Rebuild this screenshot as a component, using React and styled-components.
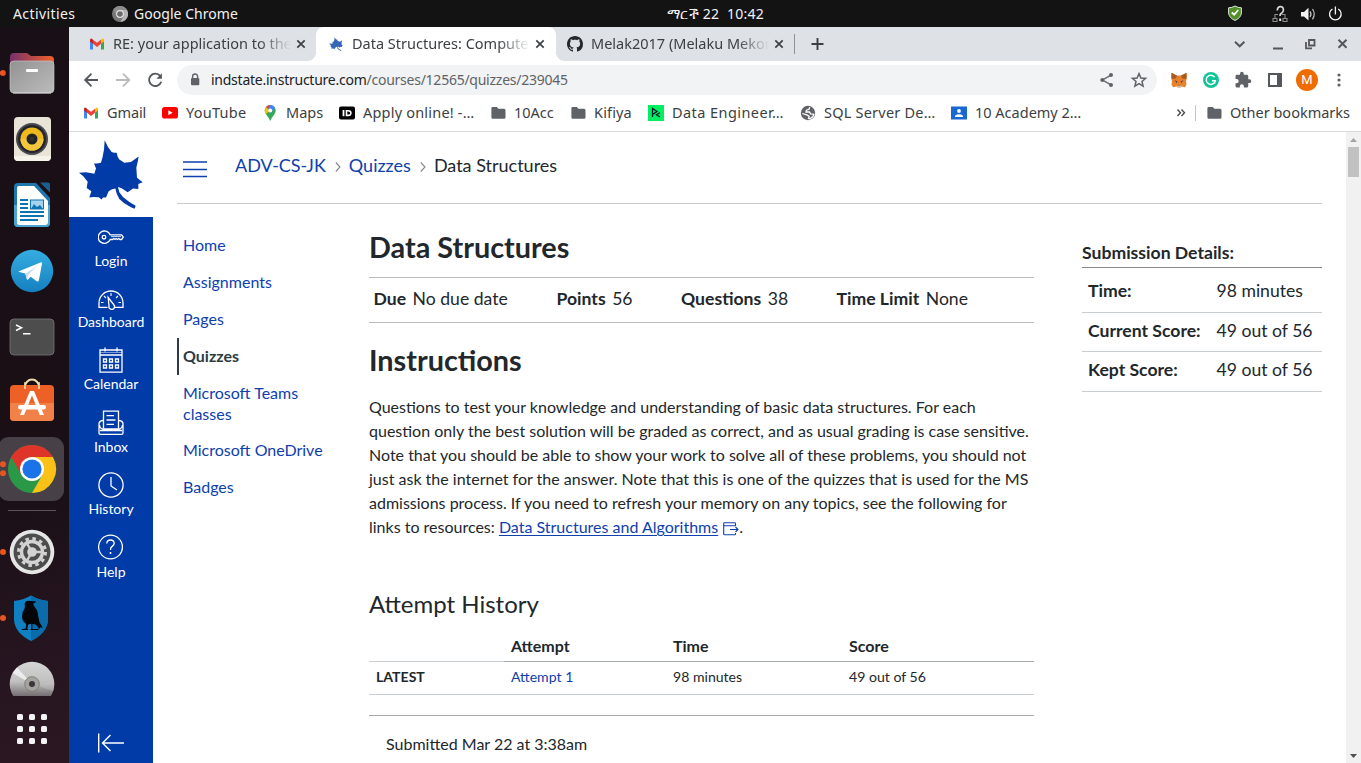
import React from "react";
import styled, { createGlobalStyle } from "styled-components";

const BLUE = "#003ba8";
const UI_FONT = '"Noto Sans", "Open Sans", "DejaVu Sans", sans-serif';

const GlobalStyle = createGlobalStyle`
  *, *::before, *::after { box-sizing: border-box; }
  body { margin: 0; overflow: hidden; background: #fff; }
  svg { display: block; flex: none; }
`;

/* ---------- desktop ---------- */
const Desktop = styled.div`
  width: 1361px;
  height: 763px;
  display: flex;
  flex-direction: column;
  overflow: hidden;
  font-family: ${UI_FONT};
`;
const TopBar = styled.header`
  height: 27px;
  flex: none;
  display: grid;
  grid-template-columns: 654px auto 1fr;
  align-items: center;
  background: #131313;
  color: #f2f2f2;
  font-size: 14px;
  line-height: 27px;
  padding: 0 18px 0 13px;
`;
const TopLeft = styled.div`
  display: flex;
  align-items: center;
  svg { margin: 0 6px 0 0; }
`;
const TopRight = styled.div`
  display: flex;
  align-items: center;
  justify-content: flex-end;
`;
const UiText = styled.span`
  white-space: pre;
  flex: none;
  width: ${(p) => (p.$w ? `${p.$w}px` : "auto")};
  letter-spacing: ${(p) => p.$ls || 0}px;
`;
const UrlText = styled(UiText)`
  margin-left: 10px;
  font-size: 14px;
  line-height: 20px;
`;
const Work = styled.div`
  flex: 1;
  min-height: 0;
  display: flex;
`;
const Dock = styled.nav`
  width: 69px;
  flex: none;
  padding-top: 13px;
  background: linear-gradient(165deg, #190f16 0%, #190f15 60%, #261520 85%, #2b1722 100%);
`;
const DockSlot = styled.div`
  height: ${(p) => p.$h || 66}px;
  overflow: hidden;
`;
const DockRule = styled.div`
  height: 17px;
  padding: 8px 0 0 8px;
  &::before { content: ""; display: block; width: 48px; height: 1px; background: #5d5459; }
`;

/* ---------- browser ---------- */
const Browser = styled.section`
  flex: 1;
  min-width: 0;
  display: flex;
  flex-direction: column;
  background: #fff;
  color: #3c4043;
  font-size: 14.5px;
`;
const TabStrip = styled.div`
  height: 34px;
  flex: none;
  display: flex;
  align-items: center;
  background: #dee1e6;
`;
const Tab = styled.div`
  position: relative;
  height: 34px;
  width: ${(p) => p.$w}px;
  display: flex;
  align-items: center;
  padding-left: ${(p) => p.$pl}px;
  background: ${(p) => (p.$active ? "#fff" : "transparent")};
  border-radius: 8px 8px 0 0;
  ${(p) =>
    p.$active &&
    `&::before, &::after {
      content: ""; position: absolute; bottom: 0; width: 8px; height: 8px;
    }
    &::before { left: -8px; background: radial-gradient(circle at 0 0, transparent 7.5px, #fff 8px); }
    &::after { right: -8px; background: radial-gradient(circle at 100% 0, transparent 7.5px, #fff 8px); }`}
`;
const TabTitle = styled.span`
  width: 178px;
  flex: none;
  margin-left: ${(p) => p.$ml || 8}px;
  padding-bottom: 2px;
  white-space: nowrap;
  mask-image: linear-gradient(90deg, #000 146px, transparent 178px);
`;
const CloseIcon = styled.svg`
  margin-left: 4px;
`;
const TabDivider = styled.i`
  width: 1px;
  height: 20px;
  background: #8f9296;
`;
const WindowButtons = styled.div`
  margin-left: auto;
  display: flex;
  align-items: center;
  padding-right: 10px;
`;
const Toolbar = styled.div`
  height: 37px;
  flex: none;
  display: flex;
  align-items: center;
  padding: 1px 6px 0 12px;
`;
const Omnibox = styled.div`
  width: 980px;
  flex: none;
  height: 30px;
  margin-left: 12px;
  border-radius: 15px;
  background: #f1f3f4;
  display: flex;
  align-items: center;
  padding: 0 8px 0 12px;
  color: #5f6368;
  b { font-weight: 400; color: #202124; }
`;
const OmniActions = styled.div`
  margin-left: auto;
  display: flex;
  gap: 12px;
`;
const Extensions = styled.div`
  display: flex;
  align-items: center;
  margin-left: 6px;
`;
const ExtSlot = styled.div`
  width: 32px;
  height: 30px;
  flex: none;
  display: flex;
  align-items: center;
  justify-content: center;
`;
const Avatar = styled.div`
  width: 22px;
  height: 22px;
  border-radius: 50%;
  background: #ef6c00;
  color: #fff;
  font: 13px/22px Roboto, sans-serif;
  text-align: center;
`;
const Bookmarks = styled.div`
  height: 34px;
  flex: none;
  display: flex;
  align-items: center;
  padding-left: 14px;
  padding-bottom: 3px;
  border-bottom: 1px solid #d9dadc;
`;
const Bookmark = styled.div`
  width: ${(p) => p.$w}px;
  flex: none;
  display: flex;
  align-items: center;
  gap: 8px;
  > span { padding-bottom: 2px; }
`;
const BookmarkDivider = styled.i`
  width: 1px;
  height: 16px;
  background: #c4c7ca;
  margin: 0 10px 0 9px;
`;

/* ---------- page ---------- */
const Page = styled.div`
  flex: 1;
  min-height: 0;
  display: flex;
  font-family: Lato, "Liberation Sans", sans-serif;
  color: #2d3b45;
`;
const GlobalNav = styled.nav`
  width: 84px;
  flex: none;
  background: ${BLUE};
  display: flex;
  flex-direction: column;
`;
const LogoBox = styled.div`
  height: 85px;
  background: #fff;
  padding: 8px 0 0 10px;
`;
const NavItem = styled.div`
  height: ${(p) => p.$h}px;
  flex: none;
  display: flex;
  flex-direction: column;
  align-items: center;
  color: #fff;
  font-size: 14px;
  line-height: 18px;
  svg { margin-bottom: ${(p) => p.$gap || 1}px; }
`;
const NavList = styled.div`
  padding-top: 7px;
  flex: 1;
`;
const NavCollapse = styled.div`
  padding: 0 0 10px 28px;
`;
const Main = styled.main`
  width: 1193px;
  flex: none;
  padding: 0 24px;
  color: #22272b;
`;
const CrumbBar = styled.div`
  height: 72px;
  display: flex;
  align-items: flex-start;
  padding: 21px 0 0 6px;
  border-bottom: 1px solid #c8cacc;
  font-size: 18px;
  line-height: 24px;
  > svg:first-child { margin-top: 7.5px; margin-right: 27px; }
`;
const Crumb = styled.span`
  color: ${(p) => (p.$current ? "#22272b" : "#0e40ae")};
`;
const CrumbArrow = styled.svg`
  margin: 8px 8px 0 9px;
`;
const Columns = styled.div`
  display: flex;
  align-items: flex-start;
`;
const CourseMenu = styled.ul`
  width: 192px;
  flex: none;
  margin: 0;
  padding: 23.4px 0 0;
  list-style: none;
  font-size: 16px;
  line-height: 21px;
`;
const MenuItem = styled.li`
  padding: 7px 20px 8.8px ${(p) => (p.$active ? 4 : 6)}px;
  border-left: ${(p) => (p.$active ? "2px solid #2d3b45" : "0")};
  color: ${(p) => (p.$active ? "#2d3b45" : "#0e40ae")};
  font-weight: ${(p) => (p.$active ? 700 : 400)};
  white-space: nowrap;
`;
const Article = styled.article`
  width: 665px;
  flex: none;
`;
const Heading = styled.h1`
  margin: ${(p) => p.$m};
  font-size: 28.8px;
  line-height: 36px;
  font-weight: 700;
`;
const Facts = styled.ul`
  margin: 0;
  padding: 0 0 4px 4.5px;
  list-style: none;
  display: flex;
  align-items: center;
  height: 46px;
  border-top: 1px solid #b9bcbe;
  border-bottom: 1px solid #b9bcbe;
  font-size: 17.6px;
`;
const Fact = styled.li`
  width: ${(p) => p.$w}px;
  flex: none;
  white-space: nowrap;
  b { margin-right: 6.5px; }
`;
const Paragraph = styled.p`
  margin: 17px 0 0;
  font-size: 16px;
  line-height: 24px;
  white-space: nowrap;
`;
const ResourceLink = styled.a`
  color: #0e40ae;
  text-decoration: underline;
  text-underline-offset: 2px;
`;
const ExternalIcon = styled.svg`
  && { display: inline-block; }
  vertical-align: -3px;
  margin-left: 5px;
`;
const SubHeading = styled.h2`
  margin: 50px 0 0;
  font-size: 24px;
  line-height: 30px;
  font-weight: 400;
`;
const Attempts = styled.div`
  margin-top: 13px;
  border-bottom: 1px solid #a7a9ab;
  height: 84px;
`;
const AttemptRow = styled.div`
  display: grid;
  grid-template-columns: 135px 162px 176px 192px;
  font-size: ${(p) => (p.$head ? 16 : 14.08)}px;
  font-weight: ${(p) => (p.$head ? 700 : 400)};
  line-height: ${(p) => (p.$head ? 27 : 30)}px;
  > span {
    padding-left: 7px;
    padding-bottom: 2px;
    border-bottom: 1px solid ${(p) => (p.$head ? "#a5abb0" : "#c7cdd1")};
  }
  > span:first-child { border-bottom-color: #c7cdd1; }
`;
const Submitted = styled.div`
  padding: 18px 0 0 17px;
  font-size: 16px;
  line-height: 20px;
`;
const Aside = styled.aside`
  width: 240px;
  margin-left: 48px;
  padding-top: 39px;
  font-size: 17.6px;
`;
const AsideTitle = styled.h3`
  margin: 0;
  height: 25px;
  line-height: 20px;
  font-size: 17.6px;
  font-weight: 700;
  border-bottom: 1px solid #888b8e;
`;
const ScoreRow = styled.div`
  height: ${(p) => p.$h}px;
  display: grid;
  grid-template-columns: 128.5px 1fr;
  align-items: center;
  padding: 0 0 ${(p) => p.$pb || 0}px 6px;
  border-bottom: 1px solid #c7cdd1;
  white-space: nowrap;
`;
const Scrollbar = styled.div`
  width: 15px;
  margin-left: auto;
  background: #f1f1f1;
  display: flex;
  flex-direction: column;
  align-items: center;
  padding: 6px 0 5px;
`;
const Thumb = styled.div`
  width: 11px;
  height: 30px;
  margin-top: 5px;
  margin-bottom: auto;
  background: #c1c1c1;
`;

/* ---------- drawings ---------- */
const LEAF =
  "M86 13 96 33 107 48 114 50 122 50 125 62 130 70 145 80 165 78 188 61 185 78 181 95 182 110 183 125 200 138 187 143 187 158 171 157 155 168 146 162 137 156 126 152 130 168 141 182 160 197 179 208 176 217 165 213 145 201 130 188 122 172 118 157 108 159 98 165 90 184 81 184 77 190 68 183 52 182 40 184 46 165 32 155 35 137 22 120 9 110 30 108 55 113 60 97 54 82 63 82 75 80 80 62 84 40Z";
const Leaf = ({ w, h, fill }) => (
  <svg width={w} height={h} viewBox="9 12 192 206" preserveAspectRatio="none">
    <path d={LEAF} fill={fill} />
  </svg>
);
const Gmail = () => (
  <svg width="16" height="16" viewBox="0 0 16 16">
    <path d="M1 4.2V13q0 .6.7.6H4V7z" fill="#4285f4" />
    <path d="M15 4.2V13q0 .6-.7.6H12V7z" fill="#34a853" />
    <path d="M12 3.7 13.2 2.7Q15 2 15 4.3V5.5L12 7.8z" fill="#fbbc04" />
    <path d="M4 3.7 2.8 2.7Q1 2 1 4.3V5.5L4 7.8z" fill="#c5221f" />
    <path d="M4 3.7 8 6.8 12 3.7V7.8L8 10.9 4 7.8z" fill="#ea4335" />
  </svg>
);
const Close = () => (
  <CloseIcon width="12" height="12" viewBox="0 0 12 12">
    <path d="M2.3 2.3 9.7 9.7M9.7 2.3 2.3 9.7" stroke="#3c4043" strokeWidth="1.7" />
  </CloseIcon>
);
const Folder = () => (
  <svg width="16" height="16" viewBox="-1 0 16 16">
    <path d="M1.6 2H5.8L7.4 3.7H13Q14.5 3.7 14.5 5.2V12.4Q14.5 13.8 13 13.8H1.8Q.4 13.8.4 12.4V3.3Q.4 2 1.6 2Z" fill="#5f6368" />
  </svg>
);
const MiniChrome = () => (
  <svg width="16" height="16" viewBox="0 0 16 16">
    <circle cx="8" cy="8" r="8" fill="#777" />
    <path d="M8 4H15A8 8 0 0 1 8.5 16L11.5 10Z" fill="#b5b5b5" />
    <path d="M8 0A8 8 0 0 0 1.2 3.8L4.5 10 8 4h7A8 8 0 0 0 8 0Z" fill="#8d8d8d" />
    <circle cx="8" cy="8" r="3.9" fill="#e4e4e4" />
    <circle cx="8" cy="8" r="2.8" fill="#6b6b6b" />
  </svg>
);
const Github = () => (
  <svg width="16" height="16" viewBox="0 0 16 16" fill="#24292f">
    <path d="M8 0C3.58 0 0 3.58 0 8c0 3.54 2.29 6.53 5.47 7.59.4.07.55-.17.55-.38 0-.19-.01-.82-.01-1.49-2.01.37-2.53-.49-2.69-.94-.09-.23-.48-.94-.82-1.13-.28-.15-.68-.52-.01-.53.63-.01 1.08.58 1.23.82.72 1.21 1.87.87 2.33.66.07-.52.28-.87.51-1.07-1.78-.2-3.64-.89-3.64-3.95 0-.87.31-1.59.82-2.15-.08-.2-.36-1.02.08-2.12 0 0 .67-.21 2.2.82.64-.18 1.32-.27 2-.27s1.36.09 2 .27c1.53-1.04 2.2-.82 2.2-.82.44 1.1.16 1.92.08 2.12.51.56.82 1.27.82 2.15 0 3.07-1.87 3.75-3.65 3.95.29.25.54.73.54 1.48 0 1.07-.01 1.93-.01 2.2 0 .21.15.46.55.38A8.01 8.01 0 0 0 16 8c0-4.42-3.58-8-8-8Z" />
  </svg>
);

const FilesIcon = () => (
  <svg width="69" height="66" viewBox="0 0 69 66">
    <defs>
      <linearGradient id="fb"><stop offset="0" stopColor="#77316a" /><stop offset="1" stopColor="#f2602a" /></linearGradient>
      <linearGradient id="ff" x2="1" y2="1"><stop offset="0" stopColor="#929292" /><stop offset="1" stopColor="#bcbcbc" /></linearGradient>
    </defs>
    <circle cx="2.8" cy="33" r="3" fill="#e95420" />
    <path d="M10 31V17Q10 13 14 13H26Q28 13 29.5 15L31 16H50Q54 16 54 20V31Z" fill="url(#fb)" />
    <rect x="10" y="21" width="44" height="32" rx="4" fill="url(#ff)" stroke="#d0d0d0" strokeWidth=".6" />
    <path d="M13 53H51" stroke="#d9d9d9" />
    <rect x="26" y="29" width="12" height="3" rx="1" fill="#fff" />
  </svg>
);
const SpeakerIcon = () => (
  <svg width="69" height="66" viewBox="0 0 69 66">
    <rect x="14" y="11" width="37" height="44" rx="4" fill="#e8e4d8" />
    <path d="M14 50Q14 55 18 55H47Q51 55 51 50Z" fill="#f6f3ea" />
    <circle cx="32" cy="33" r="16" fill="#4a4b50" /><circle cx="32" cy="33" r="14" fill="#23252b" />
    <circle cx="32" cy="33" r="11.5" fill="#edb91c" /><path d="M20.5 33A11.5 11.5 0 0 0 43.5 33Z" fill="#f2c73b" />
    <circle cx="32" cy="33" r="5.5" fill="#22242a" /><circle cx="32" cy="33" r="2" fill="#333" />
  </svg>
);
const WriterIcon = () => (
  <svg width="69" height="66" viewBox="0 0 69 66">
    <path d="M18 11H36L50 26V51Q50 55 46 55H18Q14 55 14 51V15Q14 11 18 11Z" fill="#1f77ad" />
    <path d="M14 33H50V51Q50 55 46 55H18Q14 55 14 51Z" fill="#4ba3d2" />
    <path d="M19 14H34L48 29V50Q48 53 45 53H19Q17 53 17 51V16Q17 14 19 14Z" fill="#fff" />
    <path d="M40 10.500H48Q50 10.500 50 12.500V20.500Z" fill="#19608f" />
    <path d="M20 28H28M20 32H28M20 36H28M20 40H44M20 44H44M20 48H38" stroke="#0e75b3" strokeWidth="1.8" />
    <rect x="30.5" y="28" width="13" height="9" fill="#a5d3ec" stroke="#0e75b3" />
    <path d="M31 37 34 32 37 35 40 33 43 37Z" fill="#0e75b3" />
  </svg>
);
const TelegramIcon = () => (
  <svg width="69" height="66" viewBox="0 0 69 66">
    <defs><linearGradient id="tg" x2="0" y2="1"><stop offset="0" stopColor="#35ade1" /><stop offset="1" stopColor="#1580c0" /></linearGradient></defs>
    <circle cx="32" cy="33" r="21.2" fill="url(#tg)" />
    <path d="M19 33.2 40.5 24.4Q42.3 24 42 25.8L38.9 42.2Q38.5 44.2 36.7 43.2L30.7 38.8 27.8 41.7Q27 42 26.8 41L25.3 35.6 19.3 34Q18 33.7 19 33.2Z" fill="#fff" />
    <path d="M25.3 35.6 37 28.2 28.7 36.2 27.2 41.8Z" fill="#c6dff0" />
  </svg>
);
const TerminalIcon = () => (
  <svg width="69" height="66" viewBox="0 0 69 66">
    <rect x="10" y="15" width="44" height="36" rx="4" fill="#4d4d4d" stroke="#777" strokeWidth=".8" />
    <path d="M16 21 21.5 23.7 16 26.5M23 29.7H30.5" stroke="#fff" strokeWidth="1.5" fill="none" />
  </svg>
);
const StoreIcon = () => (
  <svg width="69" height="66" viewBox="0 0 69 66">
    <path d="M25 17A7 7.4 0 0 1 39 17" fill="none" stroke="#edd9ac" strokeWidth="2" />
    <rect x="10" y="15" width="44" height="36" rx="4" fill="#ee6126" />
    <path d="M10 33H54V47Q54 51 50 51H14Q10 51 10 47Z" fill="#f28049" />
    <path d="M25 19V12M39 19V12" stroke="#edd9ac" strokeWidth="1.6" />
    <path d="M30 21H34L44 45H39.8L32 25.5 24 45H20Z" fill="#fff" />
    <rect x="18" y="35" width="28" height="4.6" rx="2.3" fill="#fff" />
  </svg>
);
const ChromeIcon = () => (
  <svg width="69" height="66" viewBox="0 0 69 66">
    <rect x="-2" y="1" width="66" height="64" rx="11" fill="#474046" />
    <circle cx="3" cy="28.3" r="3" fill="#e95420" /><circle cx="3" cy="37.3" r="3" fill="#e95420" />
    <circle cx="32" cy="33" r="24" fill="#2b9848" />
    <path d="M32 21H52.8A24 24 0 0 1 32 57L42.4 39Z" fill="#fbc116" />
    <path d="M11.2 21A24 24 0 0 1 52.8 21H32L21.6 39Z" fill="#df3429" />
    <circle cx="32" cy="33" r="12" fill="#fff" /><circle cx="32" cy="33" r="9.6" fill="#1a73e8" />
  </svg>
);
const SettingsIcon = () => (
  <svg width="69" height="66" viewBox="0 0 69 66">
    <circle cx="3" cy="33" r="3" fill="#e95420" />
    <circle cx="32" cy="33" r="22.3" fill="#e6e6e6" /><circle cx="32" cy="33" r="18.5" fill="#4c4c4c" />
    <circle cx="32" cy="33" r="13.5" fill="none" stroke="#d2d2d2" strokeWidth="3" strokeDasharray="3.53 3.54" />
    <circle cx="32" cy="33" r="10.5" fill="none" stroke="#d2d2d2" strokeWidth="3.4" />
    <circle cx="32" cy="33" r="4.8" fill="#d2d2d2" />
    <path d="M32 33H42M32 33 27 24.5M32 33 27 41.5" stroke="#d2d2d2" strokeWidth="2.4" />
  </svg>
);
const RavenIcon = () => (
  <svg width="69" height="66" viewBox="0 0 69 66">
    <circle cx="3" cy="33" r="3" fill="#e95420" />
    <path d="M31 10.5Q39 15 48 16V35Q47 48 31 56Q15 48 14 35V16Q23 15 31 10.5Z" fill="#0f80c4" />
    <path d="M31 10.5Q39 15 48 16V35Q47 48 31 56Z" fill="#0a6cab" />
    <path d="M24.6 19Q25.5 15.8 28.5 15.8L36.5 16.5 33.2 18.8Q33.3 20.5 35 22.5 38 25.5 38 30.5L39.6 37.5 42.8 42.8 40.3 42.3 39.3 44 35.7 39.5 31 38.8 28.3 39.5 27.3 43.5 28.5 45H21L22.5 43.9 25.8 43.5 26 38.8Q22 36.5 22 31.5 22 26.5 24.6 23.5 25.3 21 24.6 19Z" fill="#050608" />
    <path d="M31.8 38V44.3M30.5 44.5H38.5" stroke="#050608" strokeWidth="1.1" />
  </svg>
);
const DiscIcon = () => (
  <svg width="69" height="45" viewBox="0 0 69 45">
    <defs><linearGradient id="dg" x2="0" y2="1"><stop offset="0" stopColor="#d6d6d6" /><stop offset=".45" stopColor="#c0c0c0" /><stop offset=".8" stopColor="#6d666a" /></linearGradient></defs>
    <circle cx="32" cy="33" r="22.3" fill="url(#dg)" />
    <path d="M32 33 12.5 22 17 16.5Z" fill="#f5f5f5" opacity=".8" />
    <path d="M32 33 53 40H54L54.3 31Z" fill="#ddd" opacity=".25" />
    <circle cx="32" cy="33" r="7.3" fill="#a5a3a2" stroke="#857f73" /><circle cx="32" cy="33" r="3" fill="#39373a" />
  </svg>
);
const GridIcon = () => (
  <svg width="69" height="66" viewBox="0 0 69 66" fill="#f3f3f3">
    {[17, 29, 41].map((x) => [18, 30, 42].map((y) => <rect key={`${x}-${y}`} x={x} y={y} width="6" height="6" rx="1.6" />))}
  </svg>
);

const stroke = { fill: "none", stroke: "#fff", strokeWidth: 1.3 };
const KeyIcon = () => (
  <svg width="26" height="27" viewBox="0 0 26 27" {...stroke}>
    <path d="M12.2 10.9A6.2 6.2 0 1 0 12.2 15.500H14.5L15.8 14.5 17 15.5 18.2 14.5 19.5 15.5 20.8 14.5 22 15.5H23.6L25.3 13.2 23.6 10.9Z" />
    <circle cx="6" cy="13.2" r="1.8" /><path d="M13 12.6H23" strokeWidth=".8" />
  </svg>
);
const GaugeIcon = () => (
  <svg width="26" height="26" viewBox="0 0 26 26" {...stroke}>
    <path d="M9.5 21.3H1V17A12 12 0 0 1 25 17V21.3H17" />
    <path d="M10.2 11.5 15.6 18.5A2.8 2.8 0 1 1 11 20Z" />
    <path d="M13 7V10M6 10 8 12M20 10 18 12M3 16.5H5.5M20.5 16.5H23" strokeWidth="1.1" />
  </svg>
);
const CalendarIcon = () => (
  <svg width="26" height="26" viewBox="0 0 26 26" {...stroke}>
    <path d="M2 3H24V25.2H2ZM2 8H24M7 .5V4.5M19 .5V4.5" />
    <path d="M2 5.5H24" strokeWidth=".7" opacity=".7" />
    <path d="M5.5 12H8.5V15H5.5ZM11.5 12H14.5V15H11.5ZM17.5 12H20.5V15H17.5ZM5.5 18H8.5V21H5.5ZM11.5 18H14.5V21H11.5ZM17.5 18H20.5V21H17.5Z" strokeWidth="1.3" />
  </svg>
);
const InboxIcon = () => (
  <svg width="26" height="26" viewBox="0 0 26 26" {...stroke}>
    <path d="M5.5 18.5V1.2H20.5V18.5M8.5 5.7H16M8.5 10H17.5M8.5 14.3H16" />
    <path d="M5 10.5Q1 11 1 14V23Q1 24.4 2.5 24.4H23.5Q25 24.4 25 23V14Q25 11 21 10.5M1.5 15Q2 18.8 5 19H21Q24 18.8 24.5 15M2 20.5H24" />
  </svg>
);
const ClockIcon = () => (
  <svg width="26" height="26" viewBox="0 0 26 26" {...stroke}>
    <circle cx="13" cy="13" r="12.1" /><path d="M13 5V14L19 18" />
  </svg>
);
const HelpIcon = () => (
  <svg width="26" height="26" viewBox="0 0 26 26" {...stroke}>
    <circle cx="12.5" cy="13" r="11.9" />
    <path d="M8.8 9.5Q9 6 12.5 6T16.2 9.3Q16.2 11 14.2 12.4T12.5 16" /><path d="M12.5 18V20" strokeWidth="1.6" />
  </svg>
);

const NAV = [
  ["Login", KeyIcon, 62, 1],
  ["Dashboard", GaugeIcon, 60.5, 1],
  ["Calendar", CalendarIcon, 63.5, 2],
  ["Inbox", InboxIcon, 62, 2],
  ["History", ClockIcon, 62, 2],
  ["Help", HelpIcon, 62, 3],
];
const MENU = ["Home", "Assignments", "Pages", "Quizzes", "Microsoft Teams classes", "Microsoft OneDrive", "Badges"];
const LINES = [
  "Questions to test your knowledge and understanding of basic data structures. For each",
  "question only the best solution will be graded as correct, and as usual grading is case sensitive.",
  "Note that you should be able to show your work to solve all of these problems, you should not",
  "just ask the internet for the answer. Note that this is one of the quizzes that is used for the MS",
  "admissions process. If you need to refresh your memory on any topics, see the following for",
];

function StatusIcons() {
  return (
    <TopRight>
      <svg width="115" height="22" viewBox="0 1 115 22">
        <path d="M7 4Q4 5.8.6 5.8V11Q1 15.8 7 18.5Q13 15.8 13.4 11V5.8Q10 5.8 7 4Z" fill="#53902a" stroke="#dce6d4" />
        <path d="M3.8 10.5 6.2 12.7 10.2 8" fill="none" stroke="#fff" strokeWidth="1.8" />
        <g fill="none" stroke="#8d8d8d" strokeWidth="1.1">
          <path d="M45 16.5H49V19.5H45ZM55 16.5H59V19.5H55ZM47 16V12.5H50M57 16V12.5H54" />
          <path d="M49.3 8.5Q49.5 4.7 52.5 4.7T55.4 8Q55.4 10 53.5 11.2T52.3 14" stroke="#d8d8d8" strokeWidth="1.7" /><path d="M52.2 16.5V19" stroke="#e8e8e8" strokeWidth="2" />
        </g>
        <path d="M73 10H76L80.5 5.700V18.5L76 14.5H73Z" fill="#f2f2f2" />
        <path d="M82 9.3Q84 12 82 15M84.5 7Q88 12 84.5 17.3" fill="none" stroke="#c5c5c5" strokeWidth="1.2" />
        <path d="M110.2 7A5.8 5.8 0 1 1 104.5 7M107.4 4.5V12.5" fill="none" stroke="#f2f2f2" strokeWidth="1.3" />
      </svg>
    </TopRight>
  );
}

function Tabs() {
  return (
    <TabStrip>
      <Tab $w={247} $pl={20}>
        <Gmail /><TabTitle>RE: your application to the</TabTitle><Close />
      </Tab>
      <Tab $w={240} $pl={13} $active>
        <Leaf w={14} h={14} fill="#3367b5" /><TabTitle $ml={9}>Data Structures: Compute</TabTitle><Close />
      </Tab>
      <Tab $w={238} $pl={11}>
        <Github /><TabTitle>Melak2017 (Melaku Mekon</TabTitle><Close />
      </Tab>
      <TabDivider />
      <svg width="44" height="20" viewBox="0 0 44 20"><path d="M16.5 10H28.5M22.5 4V16" stroke="#3c4043" strokeWidth="1.9" /></svg>
      <WindowButtons>
        <svg width="118" height="20" viewBox="0 0 118 20" fill="none" stroke="#54575b" strokeWidth="2">
          <path d="M2 7.8 6.7 12.3 11.4 7.8M40 14.5H50" />
          <path d="M76 6H81.5V11.5H76ZM73 8V14.3H79" strokeWidth="1.8" />
          <path d="M105.5 5.8 113.5 13.8M113.5 5.8 105.5 13.8" />
        </svg>
      </WindowButtons>
    </TabStrip>
  );
}

function AddressBar() {
  return (
    <Toolbar>
      <svg width="84" height="20" viewBox="0 0 84 20" fill="none" stroke="#54585d" strokeWidth="1.9">
        <path d="M17 10H4.5M10.5 3.7 4.2 10 10.5 16.3" />
        <path d="M35 10H48M42 3.7 48.3 10 42 16.3" stroke="#b9bbbd" />
        <path d="M79.2 6A6.2 6.2 0 1 0 80.2 11.8" /><path d="M80.9 3.3V8.8H75.4Z" fill="#54585d" stroke="none" />
      </svg>
      <Omnibox>
        <svg width="12" height="16" viewBox="0 0 12 16"><rect x="2" y="6" width="8.3" height="7.3" rx="1" fill="#5f6368" /><path d="M3.6 6.5V4.5A2.5 2.5 0 0 1 8.6 4.5V6.5" fill="none" stroke="#5f6368" strokeWidth="1.4" /></svg>
        <UrlText $ls={-0.25}><b>indstate.instructure.com</b>/courses/12565/quizzes/239045</UrlText>
        <OmniActions>
          <svg width="20" height="20" viewBox="0 0 20 20"><path d="M14 5.2 5.5 10 14 14.8" fill="none" stroke="#5f6368" strokeWidth="1.4" /><circle cx="14" cy="5" r="2" fill="#5f6368" /><circle cx="5.3" cy="10" r="2" fill="#5f6368" /><circle cx="14" cy="15" r="2" fill="#5f6368" /></svg>
          <svg width="20" height="20" viewBox="0 0 20 20"><path d="M10 3.6 11.9 8 16.6 8.4 13 11.5 14.1 16.2 10 13.7 5.9 16.2 7 11.5 3.4 8.4 8.1 8Z" fill="none" stroke="#5f6368" strokeWidth="1.5" /></svg>
        </OmniActions>
      </Omnibox>
      <Extensions>
        <ExtSlot>
          <svg width="16" height="16" viewBox="0 0 16 16">
            <path d="M.5.7 6 3.5H10L15.5.7 16 5 15 9.5 15.5 12.5 14 15.3 10.5 14.5 9.3 15.5H6.7L5.5 14.5 2 15.3.5 12.5 1 9.5 0 5Z" fill="#e8822a" />
            <path d="M.5.7 6 3.8 5 6.5.8 7Zm15 0L10 3.8 11 6.5 15.2 7Z" fill="#a55a2a" />
            <path d="M3.5 8 6.5 9.7 5.8 11ZM12.5 8 9.5 9.7 10.2 11ZM6.7 13.5H9.3V15H6.7Z" fill="#3a3536" />
            <path d="M5.5 13 6.7 15.5H9.3L10.5 13 9.3 13.8H6.7Z" fill="#d8c7b8" />
          </svg>
        </ExtSlot>
        <ExtSlot>
          <svg width="16" height="16" viewBox="0 0 16 16"><circle cx="8" cy="8" r="8" fill="#15c39a" /><path d="M11.6 5.2A4.6 4.6 0 1 0 12.3 8.8H9M12.4 8.3 11.4 11.8" fill="none" stroke="#fff" strokeWidth="1.4" /></svg>
        </ExtSlot>
        <ExtSlot>
          <svg width="18" height="18" viewBox="0 0 24 24" fill="#5f6368"><path d="M20.5 11H19V7c0-1.1-.9-2-2-2h-4V3.5a2.5 2.5 0 0 0-5 0V5H4c-1.1 0-1.99.9-1.99 2v3.8H3.5c1.49 0 2.7 1.21 2.7 2.7s-1.21 2.7-2.7 2.7H2V20c0 1.1.9 2 2 2h3.8v-1.5c0-1.49 1.21-2.7 2.7-2.7 1.49 0 2.7 1.21 2.7 2.7V22H17c1.1 0 2-.9 2-2v-4h1.5a2.5 2.5 0 0 0 0-5z" /></svg>
        </ExtSlot>
        <ExtSlot>
          <svg width="14" height="14" viewBox="0 0 14 14"><path d="M0 0H14V14H0ZM2 2V12H9V2Z" fill="#54585d" fillRule="evenodd" /></svg>
        </ExtSlot>
        <ExtSlot><Avatar>M</Avatar></ExtSlot>
        <ExtSlot><svg width="4" height="14" viewBox="0 0 4 14" fill="#5f6368"><circle cx="2" cy="2" r="1.6" /><circle cx="2" cy="7" r="1.6" /><circle cx="2" cy="12" r="1.6" /></svg></ExtSlot>
      </Extensions>
    </Toolbar>
  );
}

function BookmarkBar() {
  return (
    <Bookmarks>
      <Bookmark $w={79}><Gmail /><UiText $ls={-0.1}>Gmail</UiText></Bookmark>
      <Bookmark $w={101}>
        <svg width="16" height="16" viewBox="0 0 16 16"><rect y="2" width="16" height="11.6" rx="2.6" fill="#f00" /><path d="M6.3 5.3 10.6 7.8 6.3 10.3Z" fill="#fff" /></svg>
        <UiText $ls={0.25}>YouTube</UiText>
      </Bookmark>
      <Bookmark $w={76}>
        <svg width="15" height="16" viewBox="0 0 15 16">
          <path d="M7.2 0A5.5 5.5 0 0 1 12.7 5.6Q12.7 8 10.5 10.5 8.3 13 7.2 16 6.1 13 3.9 10.5 1.7 8 1.7 5.6A5.5 5.5 0 0 1 7.2 0Z" fill="#34a853" />
          <path d="M3 2 7.2 5.5 2.8 9.2Q1.7 7.5 1.7 5.6 1.7 3.5 3 2Z" fill="#fbbc04" />
          <path d="M3 2A5.5 5.5 0 0 1 7.2 0L7.2 5.5Z" fill="#ea4335" />
          <path d="M7.2 0A5.5 5.5 0 0 1 12 3L7.2 8.5V5.5L5 3.8Z" fill="#4285f4" />
          <circle cx="7.2" cy="5.5" r="2" fill="#fff" />
        </svg>
        <UiText>Maps</UiText>
      </Bookmark>
      <Bookmark $w={151}>
        <svg width="16" height="16" viewBox="0 0 16 16"><rect y="1.5" width="16" height="13" rx="2" fill="#000" /><path d="M4.5 5V11.2" stroke="#fff" strokeWidth="1.8" /><path d="M7.5 5.8H9.2Q11.9 5.8 11.9 8.1T9.2 10.4H7.5Z" stroke="#fff" strokeWidth="1.6" fill="none" /></svg>
        <UiText $ls={0.2}>Apply online! -…</UiText>
      </Bookmark>
      <Bookmark $w={80}><Folder /><UiText>10Acc</UiText></Bookmark>
      <Bookmark $w={78}><Folder /><UiText $ls={0.15}>Kifiya</UiText></Bookmark>
      <Bookmark $w={152}>
        <svg width="16" height="16" viewBox="0 0 16 16"><rect width="16" height="16" fill="#03ef62" /><path d="M4.5 12V3.5L9 6.5 4.5 9.5M12 7.5 8.5 9.7 12 12" fill="none" stroke="#05192d" strokeWidth="1.3" /></svg>
        <UiText $ls={0.43}>Data Engineer…</UiText>
      </Bookmark>
      <Bookmark $w={151}>
        <svg width="16" height="16" viewBox="0 0 16 16"><circle cx="8" cy="8" r="7.2" fill="#5f6368" /><path d="M9.8 2.2 9 4.3 6.5 5.2 6 7H9.5L10.5 8.8 13.8 9.2 13 11.5 10 13.8 8.5 13.5 9.2 11.5 7.5 10.2 2.3 8.5" fill="none" stroke="#fff" strokeWidth="1.3" /></svg>
        <UiText $ls={0.22}>SQL Server De…</UiText>
      </Bookmark>
      <Bookmark $w={225}>
        <svg width="16" height="16" viewBox="0 0 16 16"><rect y="1.5" width="16" height="13" fill="#1967d2" /><circle cx="8" cy="6" r="1.9" fill="#fff" /><path d="M4 12V10.7Q8 7.8 12 10.7V12Z" fill="#fff" /></svg>
        <UiText>10 Academy 2…</UiText>
      </Bookmark>
      <svg width="10" height="10" viewBox="0 0 10 10"><path d="M1.5 1.5 4.5 4.7 1.5 8M5.5 1.5 8.5 4.7 5.5 8" fill="none" stroke="#4a4d51" strokeWidth="1.4" /></svg>
      <BookmarkDivider />
      <Bookmark $w={150}><Folder /><UiText>Other bookmarks</UiText></Bookmark>
    </Bookmarks>
  );
}

const Arrow = () => (
  <CrumbArrow width="6" height="12" viewBox="0 0 6 12"><path d="M.8 1.5 5 6 .8 10.5" fill="none" stroke="#85888b" strokeWidth="1.1" /></CrumbArrow>
);

function QuizPage() {
  return (
    <Page>
      <GlobalNav>
        <LogoBox><Leaf w={64} h={69} fill={BLUE} /></LogoBox>
        <NavList>
          {NAV.map(([label, Icon, h, gap]) => (
            <NavItem key={label} $h={h} $gap={gap}><Icon />{label}</NavItem>
          ))}
        </NavList>
        <NavCollapse>
          <svg width="28" height="20" viewBox="0 0 28 20" {...stroke}><path d="M1.7 .5V19.5M27 10H5.5M13.5 2 5.5 10 13.5 18" strokeWidth="1.4" /></svg>
        </NavCollapse>
      </GlobalNav>
      <Main>
        <CrumbBar>
          <svg width="25" height="17" viewBox="0 0 25 17"><path d="M0 1H24M0 8.5H24M0 15.5H24" stroke="#0e40ae" strokeWidth="1.5" /></svg>
          <Crumb>ADV-CS-JK</Crumb><Arrow /><Crumb>Quizzes</Crumb><Arrow /><Crumb $current>Data Structures</Crumb>
        </CrumbBar>
        <Columns>
          <CourseMenu>
            {MENU.map((m) => (
              <MenuItem key={m} $active={m === "Quizzes"}>
                {m === "Microsoft Teams classes" ? <>Microsoft Teams<br />classes</> : m}
              </MenuItem>
            ))}
          </CourseMenu>
          <Article>
            <Heading $m="25px 0 12px">Data Structures</Heading>
            <Facts>
              <Fact $w={183}><b>Due</b>No due date</Fact>
              <Fact $w={124.5}><b>Points</b>56</Fact>
              <Fact $w={155.5}><b>Questions</b>38</Fact>
              <Fact $w={140}><b>Time Limit</b>None</Fact>
            </Facts>
            <Heading $m="19px 0 0">Instructions</Heading>
            <Paragraph>
              {LINES.map((l) => <React.Fragment key={l}>{l}<br /></React.Fragment>)}
              links to resources: <ResourceLink>Data Structures and Algorithms</ResourceLink>
              <ExternalIcon width="16" height="14" viewBox="0 0 16 14"><path d="M12.5 4V1.5Q12.5 .7 11.7 .7H1.5Q.7 .7 .7 1.5V12Q.7 12.8 1.5 12.8H11.7Q12.5 12.8 12.5 12V11M.7 3.7H12.5M7 7.5H15M12.5 5 15 7.5 12.5 10" fill="none" stroke="#0e40ae" strokeWidth="1.1" /></ExternalIcon>.
            </Paragraph>
            <SubHeading>Attempt History</SubHeading>
            <Attempts>
              <AttemptRow $head><span /><span>Attempt</span><span>Time</span><span>Score</span></AttemptRow>
              <AttemptRow><span><b>LATEST</b></span><span><Crumb>Attempt 1</Crumb></span><span>98 minutes</span><span>49 out of 56</span></AttemptRow>
            </Attempts>
            <Submitted>Submitted Mar 22 at 3:38am</Submitted>
          </Article>
          <Aside>
            <AsideTitle>Submission Details:</AsideTitle>
            <ScoreRow $h={45}><b>Time:</b><span>98 minutes</span></ScoreRow>
            <ScoreRow $h={39} $pb={3}><b>Current Score:</b><span>49 out of 56</span></ScoreRow>
            <ScoreRow $h={40} $pb={4}><b>Kept Score:</b><span>49 out of 56</span></ScoreRow>
          </Aside>
        </Columns>
      </Main>
      <Scrollbar>
        <svg width="7" height="4" viewBox="0 0 7 4"><path d="M0 4 3.5 0 7 4Z" fill="#a3a3a3" /></svg>
        <Thumb />
        <svg width="7" height="4" viewBox="0 0 7 4"><path d="M0 0 3.5 4 7 0Z" fill="#505050" /></svg>
      </Scrollbar>
    </Page>
  );
}

export default function App() {
  return (
    <Desktop>
      <GlobalStyle />
      <TopBar>
        <TopLeft><UiText $w={99} $ls={0.4}>Activities</UiText><MiniChrome /><UiText $ls={0.04}>Google Chrome</UiText></TopLeft>
        <UiText $ls={0.25}>ማርች 22  10:42</UiText>
        <StatusIcons />
      </TopBar>
      <Work>
        <Dock>
          <DockSlot><FilesIcon /></DockSlot>
          <DockSlot><SpeakerIcon /></DockSlot>
          <DockSlot><WriterIcon /></DockSlot>
          <DockSlot><TelegramIcon /></DockSlot>
          <DockSlot><TerminalIcon /></DockSlot>
          <DockSlot><StoreIcon /></DockSlot>
          <DockSlot><ChromeIcon /></DockSlot>
          <DockRule />
          <DockSlot><SettingsIcon /></DockSlot>
          <DockSlot><RavenIcon /></DockSlot>
          <DockSlot $h={45}><DiscIcon /></DockSlot>
          <DockSlot><GridIcon /></DockSlot>
        </Dock>
        <Browser>
          <Tabs />
          <AddressBar />
          <BookmarkBar />
          <QuizPage />
        </Browser>
      </Work>
    </Desktop>
  );
}
